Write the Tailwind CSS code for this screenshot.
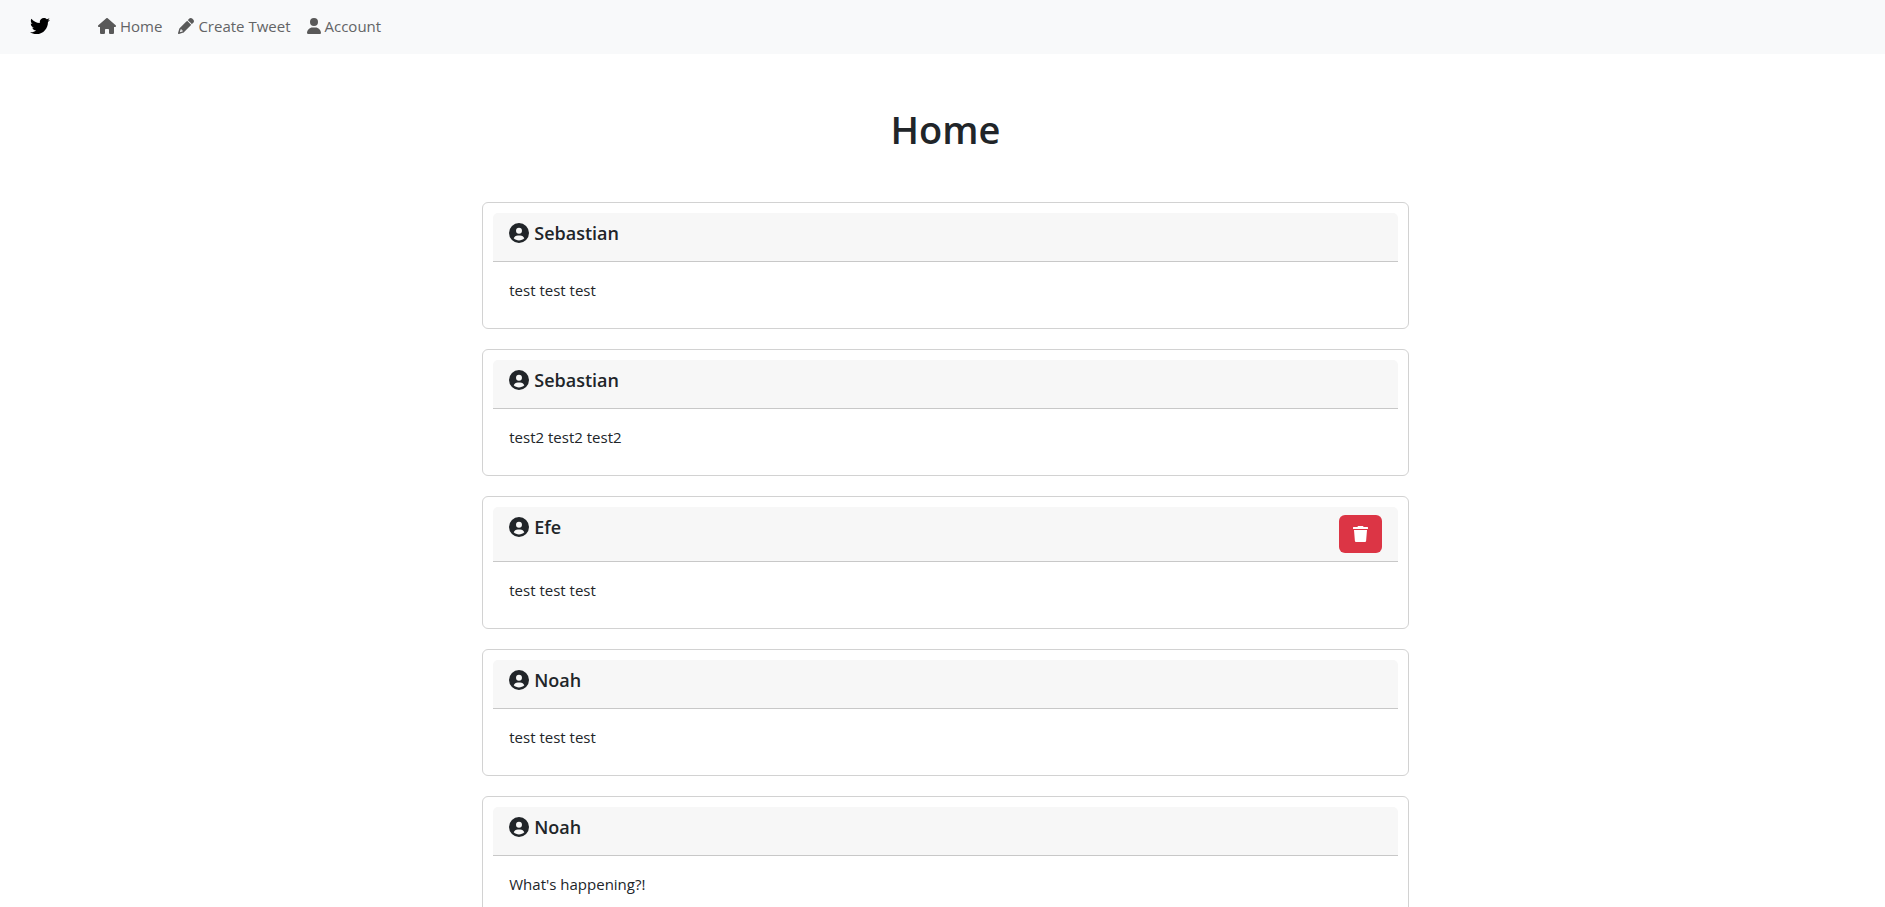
<!DOCTYPE html>
<html lang="en">
<head>
<meta charset="utf-8">
<meta name="viewport" content="width=device-width, initial-scale=1">
<title>Home</title>
<script src="https://cdn.jsdelivr.net/npm/@tailwindcss/browser@4"></script>
</head>
<body class="bg-white font-['Open_Sans','Noto_Sans',sans-serif] text-[15px] leading-6 text-[#212529]">
<svg class="hidden" aria-hidden="true">
  <symbol id="avatar" viewBox="0 0 512 512"><path fill-rule="evenodd" d="M256 0a256 256 0 1 0 0 512a256 256 0 1 0 0-512zM256 120a76 76 0 1 1 0 152a76 76 0 1 1 0-152zM256 448c-53 0-100.900-21.500-135.700-56.200C136.500 349.900 176.500 320 224 320h64c47.500 0 87.500 29.900 103.700 71.800C356.900 426.500 309 448 256 448z"/></symbol>
</svg>
<header class="bg-[#f8f9fa]">
  <nav class="flex h-[54px] items-center pl-[30px] pb-[2px]" aria-label="Main">
    <a href="#" aria-label="Twitter" class="mr-12 text-black"><svg class="size-5" viewBox="0 0 512 512" fill="currentColor"><path d="M459.370 151.716c.325 4.548.325 9.097.325 13.645 0 138.720-105.583 298.558-298.558 298.558-59.452 0-114.680-17.219-161.137-47.106 8.447.974 16.568 1.299 25.340 1.299 49.055 0 94.213-16.568 130.274-44.832-46.132-.975-84.792-31.188-98.112-72.772 6.498.974 12.995 1.624 19.818 1.624 9.421 0 18.843-1.300 27.614-3.573-48.081-9.747-84.143-51.980-84.143-102.985v-1.299c13.969 7.797 30.214 12.670 47.431 13.319-28.264-18.843-46.781-51.005-46.781-87.391 0-19.492 5.197-37.360 14.294-52.954 51.655 63.675 129.300 105.258 216.365 109.807-1.624-7.797-2.599-15.918-2.599-24.040 0-57.828 46.782-104.934 104.934-104.934 30.213 0 57.502 12.670 76.670 33.137 23.715-4.548 46.456-13.320 66.599-25.340-7.798 24.366-24.366 44.833-46.132 57.827 21.117-2.273 41.584-8.122 60.426-16.243-14.292 20.791-32.161 39.308-52.628 54.253z"/></svg></a>
    <div class="flex gap-4 text-[#636466]">
      <a href="#" class="flex items-center gap-1"><svg class="h-4 w-[18px] fill-[#595959]" viewBox="0 0 576 512"><path d="M575.800 255.500c0 18-15 32.100-32 32.100h-32l.7 160.200c0 2.700-.2 5.400-.5 8.100V472c0 22.100-17.900 40-40 40H392c-22.100 0-40-17.900-40-40V384c0-17.700-14.300-32-32-32H256c-17.700 0-32 14.300-32 32v88c0 22.100-17.900 40-40 40H104c-22.100 0-40-17.900-40-40V287.600H32c-18 0-32-14-32-32.100c0-9 3-17 10-24L266.400 8c7-7 15-8 22-8s15 2 21 7L564.800 231.500c8 7 12 15 11 24z"/></svg>Home</a>
      <a href="#" class="flex items-center gap-1"><svg class="size-4 fill-[#595959]" viewBox="0 0 512 512"><path d="M410.300 231l11.300-11.300-33.900-33.900-62.100-62.100L291.700 89.800l-11.300 11.300-22.600 22.600L58.600 322.900c-10.400 10.400-18 23.300-22.200 37.400L1 480.700c-2.500 8.400-.2 17.500 6.100 23.700s15.300 8.500 23.700 6.100l120.300-35.400c14.100-4.200 27-11.800 37.400-22.200L387.700 253.700 410.300 231zM160 399.400l-9.100 22.700c-4 3.100-8.500 5.400-13.300 6.900L59.400 452l23-78.100c1.400-4.900 3.800-9.400 6.900-13.300l22.700-9.100v32c0 8.800 7.200 16 16 16h32zM362.700 18.700L348.300 33.200 325.700 55.800 314.300 67.100l33.900 33.900 62.100 62.100 33.900 33.900 11.300-11.300 22.600-22.600 14.500-14.500c25-25 25-65.500 0-90.500L453.300 18.700c-25-25-65.500-25-90.500 0z"/></svg>Create Tweet</a>
      <a href="#" class="flex items-center gap-1"><svg class="h-4 w-[14px] fill-[#595959]" viewBox="0 0 448 512"><path d="M224 256A128 128 0 1 0 224 0a128 128 0 1 0 0 256zm-45.700 48C79.800 304 0 383.800 0 482.300C0 498.700 13.300 512 29.700 512H418.300c16.400 0 29.700-13.300 29.700-29.700C448 383.800 368.200 304 269.700 304H178.300z"/></svg>Account</a>
    </div>
  </nav>
</header>
<main class="mx-auto flex w-1/2 flex-col gap-5 pr-[5px] pl-[11px] pb-5">
  <h1 class="mt-[51px] mb-[29px] text-center text-[38px] leading-12 font-semibold">Home</h1>
  <article class="rounded-md border border-[#d2d2d2] p-[10px]">
    <header class="flex items-start gap-[5px] rounded-t-[5px] border-b border-[#c8c8c8] bg-[#f7f7f7] px-4 py-2">
      <svg class="mt-[2px] size-5 fill-current" aria-hidden="true"><use href="#avatar"/></svg>
      <h2 class="mb-2 text-lg leading-6 font-semibold">Sebastian</h2>
    </header>
    <p class="p-4">test test test</p>
  </article>
  <article class="rounded-md border border-[#d2d2d2] p-[10px]">
    <header class="flex items-start gap-[5px] rounded-t-[5px] border-b border-[#c8c8c8] bg-[#f7f7f7] px-4 py-2">
      <svg class="mt-[2px] size-5 fill-current" aria-hidden="true"><use href="#avatar"/></svg>
      <h2 class="mb-2 text-lg leading-6 font-semibold">Sebastian</h2>
    </header>
    <p class="p-4">test2 test2 test2</p>
  </article>
  <article class="rounded-md border border-[#d2d2d2] p-[10px]">
    <header class="flex items-start gap-[5px] rounded-t-[5px] border-b border-[#c8c8c8] bg-[#f7f7f7] px-4 py-2">
      <svg class="mt-[2px] size-5 fill-current" aria-hidden="true"><use href="#avatar"/></svg>
      <h2 class="mb-2 text-lg leading-6 font-semibold">Efe</h2>
      <button type="button" aria-label="Delete tweet" class="ml-auto flex h-[38px] w-[43px] items-center justify-center rounded-md bg-[#dc3545] text-white"><svg class="h-4 w-[15px]" viewBox="0 0 15 16" fill="currentColor"><path d="M5 0h5l.6 1H14.500q.5 0 .5.500V2.500q0 .5-.5.500H.5Q0 3 0 2.500V1.500Q0 1 .5 1H4.400zM1 4h13l-.9 11q-.1 1-1.100 1H3q-1 0-1.100-1z"/></svg></button>
    </header>
    <p class="p-4">test test test</p>
  </article>
  <article class="rounded-md border border-[#d2d2d2] p-[10px]">
    <header class="flex items-start gap-[5px] rounded-t-[5px] border-b border-[#c8c8c8] bg-[#f7f7f7] px-4 py-2">
      <svg class="mt-[2px] size-5 fill-current" aria-hidden="true"><use href="#avatar"/></svg>
      <h2 class="mb-2 text-lg leading-6 font-semibold">Noah</h2>
    </header>
    <p class="p-4">test test test</p>
  </article>
  <article class="rounded-md border border-[#d2d2d2] p-[10px]">
    <header class="flex items-start gap-[5px] rounded-t-[5px] border-b border-[#c8c8c8] bg-[#f7f7f7] px-4 py-2">
      <svg class="mt-[2px] size-5 fill-current" aria-hidden="true"><use href="#avatar"/></svg>
      <h2 class="mb-2 text-lg leading-6 font-semibold">Noah</h2>
    </header>
    <p class="p-4">What's happening?!</p>
  </article>
</main>
</body>
</html>
